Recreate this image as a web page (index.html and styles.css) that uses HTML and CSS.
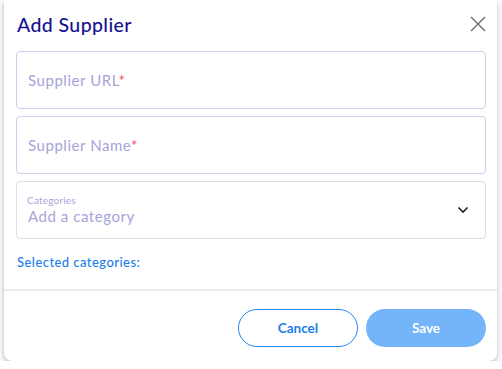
FILE: index.html
```html
<!DOCTYPE html>
<html lang="en">
<head>
    <meta charset="UTF-8">
    <meta name="viewport" content="width=device-width, initial-scale=1.0">
    <title>Add Supplier</title>
    <link rel="stylesheet" href="styles.css">
</head>
<body>
    <div class="dialog">
        <div class="dialog-body">
            <div class="dialog-header">
                <h2>Add Supplier</h2>
                <button class="close" aria-label="Close">
                    <svg width="16" height="16" viewBox="0 0 16 16">
                        <path d="M1 1 L15 15 M15 1 L1 15" stroke="#6b6b6b" stroke-width="1.4" fill="none"/>
                    </svg>
                </button>
            </div>

            <div class="field">
                <span class="placeholder">Supplier URL<span class="req">*</span></span>
            </div>
            <div class="field">
                <span class="placeholder">Supplier Name<span class="req">*</span></span>
            </div>
            <div class="field select">
                <div class="select-text">
                    <span class="select-label">Categories</span>
                    <span class="placeholder">Add a category</span>
                </div>
                <svg class="chevron" width="12" height="8" viewBox="0 0 12 8">
                    <path d="M1.5 1.5 L6 6 L10.5 1.5" stroke="#1e1e2e" stroke-width="1.6" fill="none"/>
                </svg>
            </div>

            <div class="selected">Selected categories:</div>
        </div>

        <div class="dialog-footer">
            <button class="btn btn-outline">Cancel</button>
            <button class="btn btn-primary">Save</button>
        </div>
    </div>
</body>
</html>
```

FILE: styles.css
```css
:root {
    --navy: #15138f;
    --blue: #1c7ee8;
    --purple: #a7a3db;
    --field-border: #cfcbee;
}

* {
    box-sizing: border-box;
    margin: 0;
    padding: 0;
}

body {
    font-family: 'Lato', 'Open Sans', sans-serif;
    background: #ffffff;
    padding: 0 5px 0 4px;
}

.dialog {
    background: #ffffff;
    height: 361px;
    border-radius: 0 0 8px 8px;
    box-shadow: 0 3px 6px rgba(0, 0, 0, 0.25), -1px 0 3px rgba(0, 0, 0, 0.06);
    display: flex;
    flex-direction: column;
}

.dialog-body {
    padding: 11px 11px 0 12px;
    height: 289px;
}

.dialog-header {
    display: flex;
    justify-content: space-between;
    align-items: center;
    height: 26px;
    margin-bottom: 14px;
}

h2 {
    color: var(--navy);
    font-size: 19.5px;
    font-weight: 500;
    padding-left: 1px;
    letter-spacing: 0.4px;
}

.close {
    background: none;
    border: none;
    width: 16px;
    height: 16px;
    display: flex;
}

.field {
    height: 58px;
    border: 1px solid var(--field-border);
    border-radius: 4px;
    display: flex;
    align-items: center;
    padding: 0 11px;
    margin-bottom: 7px;
}

.placeholder {
    color: var(--purple);
    font-size: 15px;
    letter-spacing: 0.55px;
}

.req {
    color: #ef4a5f;
}

.select {
    border-color: #dcdde5;
    justify-content: space-between;
    padding-right: 16px;
}

.select-text {
    display: flex;
    flex-direction: column;
    margin-top: -2px;
}

.select-label {
    color: var(--purple);
    font-size: 10px;
    letter-spacing: 0.2px;
    margin-bottom: 1px;
    margin-left: -1px;
}

.selected {
    color: var(--blue);
    font-size: 13px;
    font-weight: 500;
    letter-spacing: 0.45px;
    margin-top: 15px;
    padding-left: 1px;
}

.dialog-footer {
    border-top: 2px solid #e8ebf0;
    flex: 1;
    display: flex;
    justify-content: flex-end;
    gap: 8px;
    padding: 18px 11px 0 0;
}

.btn {
    width: 120px;
    height: 38px;
    border-radius: 19px;
    font-family: inherit;
    font-size: 13.5px;
    font-weight: 700;
}

.btn-outline {
    background: #ffffff;
    border: 1px solid #2a86f0;
    color: var(--blue);
}

.btn-primary {
    background: #74b4f8;
    border: none;
    color: #ffffff;
}
```
